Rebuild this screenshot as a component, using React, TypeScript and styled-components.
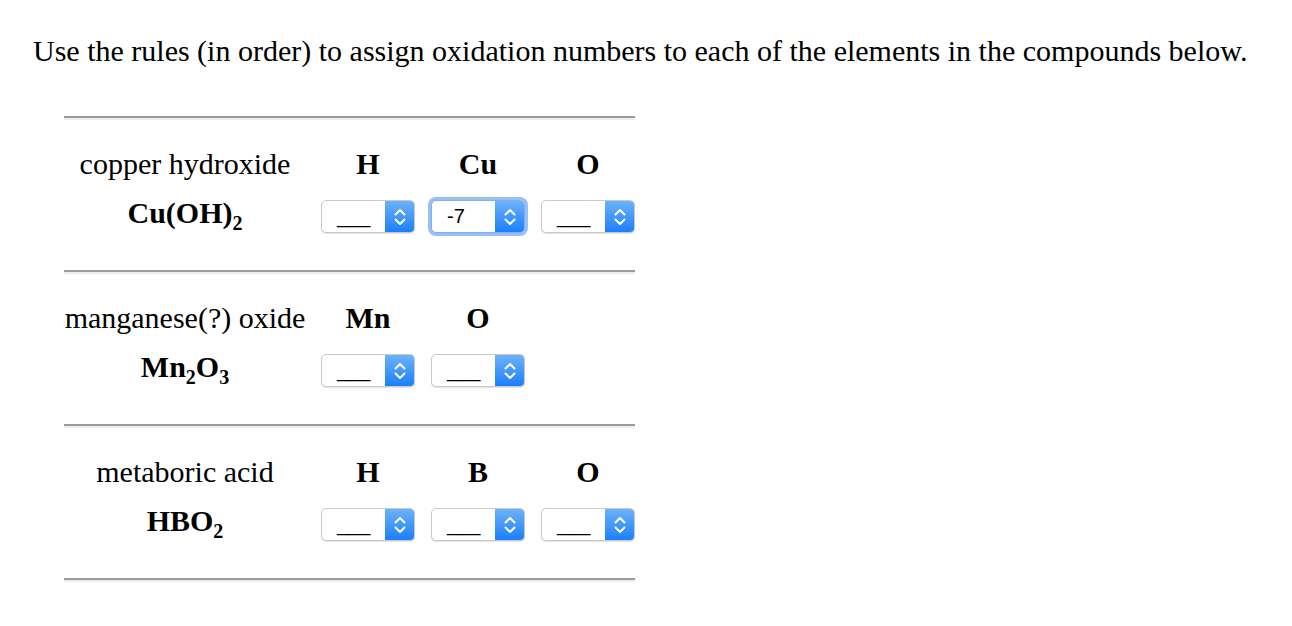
import React from "react";
import styled, { createGlobalStyle } from "styled-components";

type Compound = {
  name: string;
  formula: React.ReactNode;
  elements: string[];
  values?: string[];
  focused?: number;
};

const compounds: Compound[] = [
  {
    name: "copper hydroxide",
    formula: (
      <>
        Cu(OH)<sub>2</sub>
      </>
    ),
    elements: ["H", "Cu", "O"],
    values: ["___", "-7", "___"],
    focused: 1,
  },
  {
    name: "manganese(?) oxide",
    formula: (
      <>
        Mn<sub>2</sub>O<sub>3</sub>
      </>
    ),
    elements: ["Mn", "O"],
  },
  {
    name: "metaboric acid",
    formula: (
      <>
        HBO<sub>2</sub>
      </>
    ),
    elements: ["H", "B", "O"],
  },
];

const GlobalStyle = createGlobalStyle`
  html, body {
    margin: 0;
    padding: 0;
    background: #ffffff;
  }
  body {
    font-family: "Liberation Serif", "Times New Roman", serif;
    color: #000000;
  }
`;

export default function App() {
  return (
    <>
      <GlobalStyle />
      <StyledPage>
        <StyledTitle>
          Use the rules (in order) to assign oxidation numbers to each of the
          elements in the compounds below.
        </StyledTitle>
        <StyledTable>
          <StyledRule />
          {compounds.map((c) => (
            <React.Fragment key={c.name}>
              <StyledSection>
                <StyledName>{c.name}</StyledName>
                {[0, 1, 2].map((i) => (
                  <StyledHeader key={i}>{c.elements[i] ?? ""}</StyledHeader>
                ))}
                <StyledFormula>{c.formula}</StyledFormula>
                {[0, 1, 2].map((i) => (
                  <StyledCell key={i}>
                    {c.elements[i] && (
                      <Select
                        value={c.values?.[i] ?? "___"}
                        focused={c.focused === i}
                      />
                    )}
                  </StyledCell>
                ))}
              </StyledSection>
              <StyledRule />
            </React.Fragment>
          ))}
        </StyledTable>
      </StyledPage>
    </>
  );
}

const Select = ({ value, focused }: { value: string; focused: boolean }) => {
  return (
    <StyledSelect $focused={focused}>
      <StyledValue>{value}</StyledValue>
      <StyledArrow>
        <svg width="12" height="18" viewBox="0 0 12 18" fill="none">
          <path
            d="M1.5 6.5 L6 2 L10.5 6.5"
            stroke="#ffffff"
            strokeWidth="2"
            strokeLinecap="round"
            strokeLinejoin="round"
          />
          <path
            d="M1.5 11.5 L6 16 L10.5 11.5"
            stroke="#ffffff"
            strokeWidth="2"
            strokeLinecap="round"
            strokeLinejoin="round"
          />
        </svg>
      </StyledArrow>
    </StyledSelect>
  );
};

const StyledPage = styled.div`
  padding: 34px 0 0 33px;
`;

const StyledTitle = styled.p`
  margin: 0 0 48px 0;
  font-size: 30px;
  line-height: 34px;
  white-space: nowrap;
`;

const StyledTable = styled.div`
  margin-left: 31px;
  width: 571px;
`;

const StyledRule = styled.div`
  height: 0;
  border-top: 2px solid #9b9b9b;
  border-bottom: 2px solid #eeeeee;
`;

const StyledSection = styled.div`
  display: grid;
  grid-template-columns: 249px repeat(3, 110px);
  grid-template-rows: 34px 33px;
  row-gap: 19px;
  padding: 27px 0 37px 0;
  font-size: 30px;
  line-height: 34px;
`;

const StyledName = styled.div`
  padding-right: 7px;
  text-align: center;
  white-space: nowrap;
`;

const StyledHeader = styled.div`
  text-align: center;
  font-weight: bold;
`;

const StyledFormula = styled.div`
  padding-right: 7px;
  text-align: center;
  font-weight: bold;
  white-space: nowrap;
  line-height: 25px;

  sub {
    font-size: 20px;
    line-height: 0;
    vertical-align: -7px;
  }
`;

const StyledCell = styled.div`
  display: flex;
  justify-content: center;
  align-items: center;
`;

const StyledSelect = styled.div<{ $focused: boolean }>`
  width: 94px;
  height: 33px;
  box-sizing: border-box;
  display: flex;
  border: 1px solid ${(p) => (p.$focused ? "#7fb0ee" : "#c9c9c9")};
  border-radius: 5px;
  background: #ffffff;
  box-shadow: ${(p) =>
    p.$focused
      ? "0 0 0 3px rgba(120, 170, 240, 0.75)"
      : "0 1px 1px rgba(0, 0, 0, 0.12)"};
  overflow: hidden;
`;

const StyledValue = styled.div`
  flex: 1;
  padding-left: 15px;
  font-family: "Liberation Sans", Arial, sans-serif;
  font-size: 20px;
  line-height: 31px;
  color: #000000;
`;

const StyledArrow = styled.div`
  width: 29px;
  display: flex;
  align-items: center;
  justify-content: center;
  background: linear-gradient(#6db2fb, #1b7ffb);
`;
